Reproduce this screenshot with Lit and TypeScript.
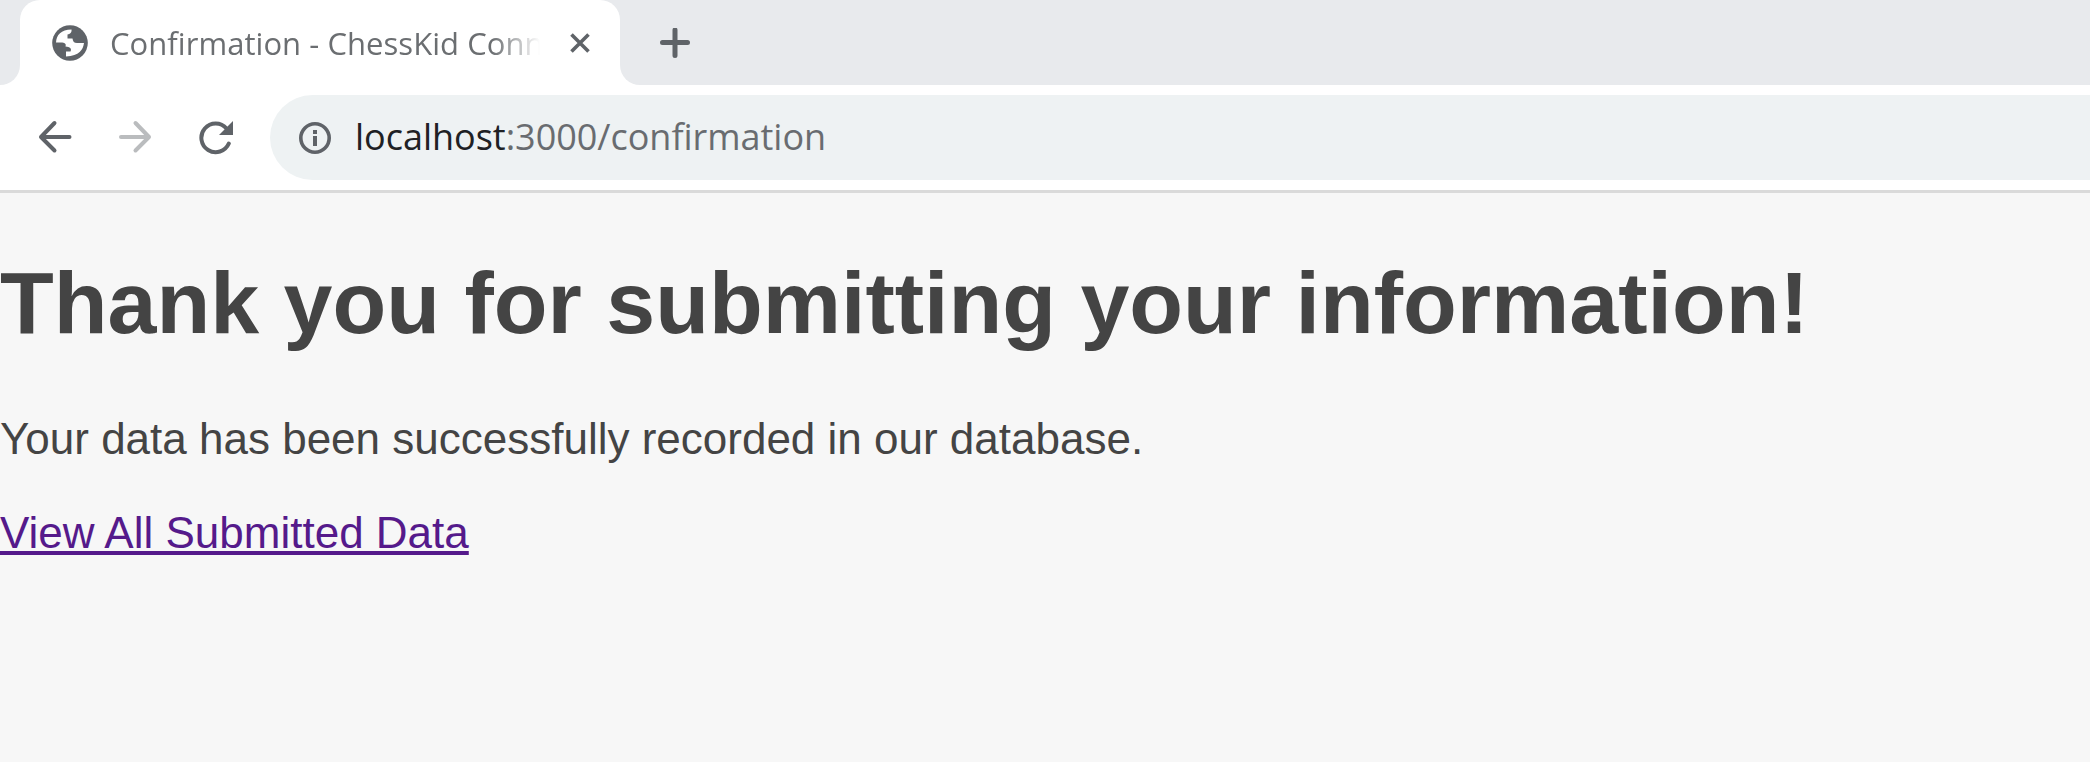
import { LitElement, html, css } from "lit";
import { customElement } from "lit/decorators.js";

@customElement("browser-tabs")
class BrowserTabs extends LitElement {
  static styles = css`
    :host { display: flex; height: 85px; background: #e8eaed; overflow: hidden; }
    .fill { height: 100%; background: #e8eaed; }
    .left { border-bottom-right-radius: 20px; }
    .right { border-bottom-left-radius: 20px; flex: 1; }
    .start { width: 20px; background: #fff; }
    .end { flex: 1; background: #fff; display: flex; }
    .tab-bg { background: #e8eaed; }
    .tab { width: 600px; height: 85px; background: #fff; border-radius: 20px 20px 0 0; display: flex; align-items: center; box-sizing: border-box; padding-left: 32px; }
    .favicon { width: 36px; height: 36px; }
    .title { margin-left: 22px; width: 430px; white-space: nowrap; font: 31px/42px "Open Sans", "Noto Sans", sans-serif; letter-spacing: 0.05px; color: #6b6e71; mask-image: linear-gradient(to right, #000 382px, transparent 430px); }
    .close { width: 20px; height: 20px; margin-left: 30px; }
    .plus { width: 30px; height: 30px; margin: 28px 0 0 40px; }
    svg { display: block; flex: none; }
  `;
  render() {
    return html`
      <div class="start"><div class="fill left"></div></div>
      <div class="tab-bg"><div class="tab">
        <svg class="favicon" viewBox="0 0 36 36"><circle cx="18" cy="18" r="17.8" fill="#5f6368"/>
          <path d="M4 17.5C4.500 9.500 9 5 19.500 4.500C20 7.500 18 9 15.500 9.500V13.500H20.500C21 16.500 22 18 25 18H32C31 25 27.500 30.500 14 31.500V26.500H18.500C20 23.500 18 22 13.500 21.500C14.500 18.500 12.500 17.500 9 17.500Z" fill="#fff"/></svg>
        <div class="title">Confirmation - ChessKid Conn</div>
        <svg class="close" viewBox="0 0 20 20"><path d="M1.500 1.500L18.500 18.500M18.500 1.500L1.500 18.500" stroke="#5f6368" stroke-width="3.600"/></svg>
      </div></div>
      <div class="end"><div class="fill right">
        <svg class="plus" viewBox="0 0 30 30"><path d="M2.500 14.500H27.500M15 2V27.500" stroke="#5f6368" stroke-width="5" stroke-linecap="round"/></svg>
      </div></div>`;
  }
}

@customElement("browser-toolbar")
class BrowserToolbar extends LitElement {
  static styles = css`
    :host { display: flex; height: 108px; box-sizing: border-box; padding-top: 10px; border-bottom: 3px solid #dadada; background: #fff; }
    .nav { display: flex; width: 270px; box-sizing: border-box; padding: 24px 0 0 37px; gap: 44px; }
    .nav svg { width: 36px; height: 36px; flex: none; }
    .address { flex: 1; height: 85px; background: #eef2f3; border-radius: 42.5px 0 0 42.5px; display: flex; align-items: center; padding-left: 29px; }
    .info { width: 32px; height: 32px; flex: none; margin-top: 1px; }
    .url { margin: 0 0 1px 24px; font: 36px/48px "Open Sans", "Noto Sans", sans-serif; letter-spacing: -0.02px; color: #696c70; white-space: nowrap; }
    .host { color: #202124; }
  `;
  render() {
    return html`
      <div class="nav">
        <svg viewBox="0 0 36 36" fill="none" stroke="#5f6368" stroke-width="4" stroke-linecap="round" stroke-linejoin="round"><path d="M32.500 18H4M17.500 4L4 18L17.500 31.500"/></svg>
        <svg viewBox="0 0 36 36" fill="none" stroke="#babcbe" stroke-width="4" stroke-linecap="round" stroke-linejoin="round"><path d="M4 18H32M18.500 4L32 18L18.500 31.500"/></svg>
        <svg viewBox="0 0 36 36"><path d="M29.500 9.500A14.300 14.300 0 1 0 31.800 24.500" fill="none" stroke="#5f6368" stroke-width="4" stroke-linecap="round"/><path d="M36 2V16H22Z" fill="#5f6368"/></svg>
      </div>
      <div class="address">
        <svg class="info" viewBox="0 0 32 32"><circle cx="16" cy="16" r="14.200" fill="none" stroke="#5f6368" stroke-width="3.600"/><path d="M14 8h4v4h-4zM14 14h4v10h-4z" fill="#5f6368"/></svg>
        <div class="url"><span class="host">localhost</span>:3000/confirmation</div>
      </div>`;
  }
}

@customElement("app-root")
class AppRoot extends LitElement {
  static styles = css`
    :host { display: flex; flex-direction: column; height: 762px; overflow: hidden; background: #f7f7f7; }
    main { font: 44px/50px "Liberation Sans", Arial, sans-serif; color: #444; }
    h1 { font-size: 88px; line-height: 101px; margin: 59px 0 61px; }
    p { margin: 0 0 44px; }
    a { color: #551a8b; text-decoration: underline; }
  `;
  render() {
    return html`
      <browser-tabs></browser-tabs>
      <browser-toolbar></browser-toolbar>
      <main>
        <h1>Thank you for submitting your information!</h1>
        <p>Your data has been successfully recorded in our database.</p>
        <a href="#">View All Submitted Data</a>
      </main>`;
  }
}
